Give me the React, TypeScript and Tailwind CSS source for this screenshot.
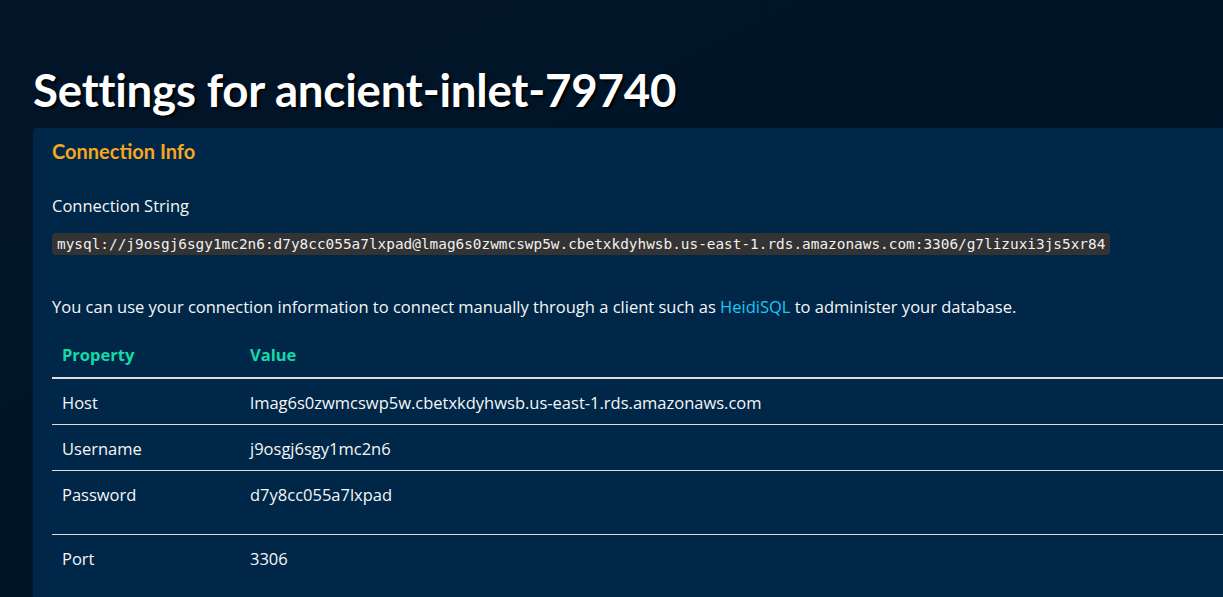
import React from "react";

const rows: { k: string; v: string; tall?: boolean }[] = [
  { k: "Host", v: "lmag6s0zwmcswp5w.cbetxkdyhwsb.us-east-1.rds.amazonaws.com" },
  { k: "Username", v: "j9osgj6sgy1mc2n6" },
  { k: "Password", v: "d7y8cc055a7lxpad", tall: true },
  { k: "Port", v: "3306" },
];

export default function App() {
  return (
    <div className="min-h-[597px] w-[1223px] overflow-hidden bg-gradient-to-br from-[#011428] to-[#001529] pl-[33px] pt-[62px] text-[#f4f6f8] [font-family:'Open_Sans',sans-serif]">
      <h1 className="m-0 text-[45.6px] font-bold leading-[56px] tracking-[-0.2px] text-white [font-family:Lato,sans-serif] [text-shadow:2px_2px_2px_rgba(0,0,0,0.9)]">
        Settings for ancient-inlet-79740
      </h1>
      <div className="mt-[10px] w-[1240px] rounded-tl-[4px] bg-[#002747] px-[19px] pt-[11px] pb-[40px]">
        <h2 className="text-[20px] font-bold leading-[24px] text-[#f5a623] [font-family:Lato,sans-serif]">
          Connection Info
        </h2>
        <div className="mt-[32px] text-[16.5px] leading-[22px]">Connection String</div>
        <div className="mt-[14px]">
          <code className="inline-block rounded-[4px] bg-[#333333] px-[5px] py-[1px] text-[14.4px] leading-[20px] text-[#f0f0f0] [font-family:'DejaVu_Sans_Mono',monospace]">
            mysql://j9osgj6sgy1mc2n6:d7y8cc055a7lxpad@lmag6s0zwmcswp5w.cbetxkdyhwsb.us-east-1.rds.amazonaws.com:3306/g7lizuxi3js5xr84
          </code>
        </div>
        <p className="mt-[41px] text-[16.5px] leading-[22px]">
          You can use your connection information to connect manually through a client such as{" "}
          <a className="text-[#1ec8f5]">HeidiSQL</a> to administer your database.
        </p>
        <table className="mt-[26px] w-full border-collapse text-[16.5px]">
          <thead>
            <tr className="border-b-2 border-[#dddddd]">
              <th className="w-[198px] px-[10px] pb-[11px] text-left text-[16.5px] font-bold leading-[22px] text-[#14d9a8]">
                Property
              </th>
              <th className="px-0 pb-[11px] text-left text-[16.5px] font-bold leading-[22px] text-[#14d9a8]">
                Value
              </th>
            </tr>
          </thead>
          <tbody>
            {rows.map((r, i) => (
              <tr key={r.k} className={i < rows.length - 1 ? "border-b border-[#dddddd]" : ""}>
                <td className={`px-[10px] align-top leading-[22px] pt-[13px] ${r.tall ? "pb-[28px]" : "pb-[10px]"}`}>
                  {r.k}
                </td>
                <td className={`px-0 align-top leading-[22px] pt-[13px] ${r.tall ? "pb-[28px]" : "pb-[10px]"}`}>
                  {r.v}
                </td>
              </tr>
            ))}
          </tbody>
        </table>
      </div>
    </div>
  );
}
